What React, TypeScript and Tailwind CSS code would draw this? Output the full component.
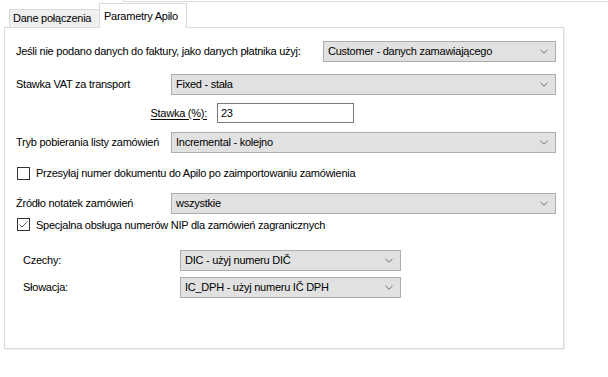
const Chevron = () => (
  <svg width="8" height="5" viewBox="0 0 8 5" className="shrink-0">
    <path d="M0.5 0.8 L4 4.2 L7.5 0.8" fill="none" stroke="#707070" strokeWidth="1" />
  </svg>
);

const Combo = ({ value, className }: { value: string; className: string }) => (
  <div
    className={`flex h-[21px] shrink-0 items-center justify-between border border-[#adadad] bg-[#e1e1e1] pl-[4px] pr-[7px] ${className}`}
  >
    <span className="leading-none">{value}</span>
    <Chevron />
  </div>
);

const CheckBox = ({ checked }: { checked?: boolean }) => (
  <div className="flex h-[13px] w-[13px] shrink-0 items-center justify-center border border-[#333333] bg-white">
    {checked && (
      <svg width="11" height="11" viewBox="0 0 11 11">
        <path d="M1.5 5.5 L4 8 L9.5 2.5" fill="none" stroke="#555555" strokeWidth="1" />
      </svg>
    )}
  </div>
);

export default function App() {
  return (
    <div className="h-[377px] w-[608px] overflow-hidden whitespace-nowrap bg-white text-[11px] tracking-[-0.25px] text-black [font-family:'Liberation_Sans',Arial,sans-serif]">
      <div className="h-[3px]">
        <div className="ml-[123px] h-[2px] border-b border-l border-[#d9d9d9]" />
      </div>

      <div className="flex h-[24px] items-end pl-[9px]">
        <div className="flex h-[18px] w-[90px] items-center border-l border-t border-[#d9d9d9] bg-[#f0f0f0] pl-[3px]">
          Dane połączenia
        </div>
        <div className="relative z-10 -mb-px flex h-[25px] w-[88px] items-start border-x border-t border-[#d9d9d9] bg-white pl-[4px] pt-[4px]">
          Parametry Apilo
        </div>
      </div>

      <div className="ml-[4px] h-[322px] w-[560px] border border-[#dadada] shadow-[1px_1px_0_#f0f0f0]">
        <div className="flex flex-col pl-[11px]">
          <div className="mt-[13px] flex items-center">
            <span className="w-[307px]">Jeśli nie podano danych do faktury, jako danych płatnika użyj:</span>
            <Combo value="Customer - danych zamawiającego" className="w-[233px]" />
          </div>

          <div className="mt-[12px] flex items-center">
            <span className="w-[155px]">Stawka VAT za transport</span>
            <Combo value="Fixed - stała" className="w-[385px]" />
          </div>

          <div className="mt-[8px] flex items-center">
            <span className="w-[201px] pr-[10px] text-right">
              <span className="underline underline-offset-2">Stawka (%):</span>
            </span>
            <div className="flex h-[20px] w-[137px] items-center border border-[#7a7a7a] bg-white pl-[3px]">23</div>
          </div>

          <div className="mt-[9px] flex items-center">
            <span className="w-[155px]">Tryb pobierania listy zamówień</span>
            <Combo value="Incremental - kolejno" className="w-[385px]" />
          </div>

          <div className="mt-[12px] flex items-center gap-[6px] pl-[1px]">
            <CheckBox />
            <span>Przesyłaj numer dokumentu do Apilo po zaimportowaniu zamówienia</span>
          </div>

          <div className="mt-[11px] flex items-center">
            <span className="w-[155px]">Źródło notatek zamówień</span>
            <Combo value="wszystkie" className="w-[385px]" />
          </div>

          <div className="mt-[3px] flex items-center gap-[6px] pl-[1px]">
            <CheckBox checked />
            <span>Specjalna obsługa numerów NIP dla zamówień zagranicznych</span>
          </div>

          <div className="mt-[17px] flex items-center pl-[7px]">
            <span className="w-[157px]">Czechy:</span>
            <Combo value="DIC - użyj numeru DIČ" className="w-[221px]" />
          </div>

          <div className="mt-[6px] flex items-center pl-[7px]">
            <span className="w-[157px]">Słowacja:</span>
            <Combo value="IC_DPH - użyj numeru IČ DPH" className="w-[221px]" />
          </div>
        </div>
      </div>
    </div>
  );
}
